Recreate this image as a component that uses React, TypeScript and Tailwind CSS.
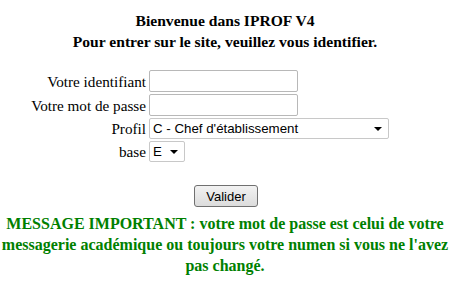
export default function App() {
  return (
    <main className="w-[450px] h-[285px] bg-white text-black font-['Liberation_Serif',serif] text-[16px] overflow-hidden">
      <div className="pt-[10px] text-center font-bold text-[15.6px] leading-[21px]">
        <p>Bienvenue dans IPROF V4</p>
        <p>Pour entrer sur le site, veuillez vous identifier.</p>
      </div>

      {/* formulaire */}
      <form className="mt-[18px] flex flex-col gap-[2px]">
        <div className="flex items-center gap-[3px]">
          <label className="w-[146px] text-right text-[15.2px] leading-[21px]">Votre identifiant</label>
          <input type="text" className="w-[149px] h-[22px] border border-[#b8b8b8] rounded-[2px] bg-white px-1 text-[13px]" />
        </div>
        <div className="flex items-center gap-[3px]">
          <label className="w-[146px] text-right text-[15.2px] leading-[21px]">Votre mot de passe</label>
          <input type="password" className="w-[149px] h-[22px] border border-[#b8b8b8] rounded-[2px] bg-white px-1 text-[13px]" />
        </div>
        <div className="flex items-center gap-[3px]">
          <label className="w-[146px] text-right text-[15.2px] leading-[21px]">Profil</label>
          <div className="w-[240px] h-[21px] border border-[#c8c8c8] rounded-[2px] bg-white flex items-center justify-between pl-[3px] pr-[6px] font-['Liberation_Sans',sans-serif] text-[13.3px]">
            <span>C - Chef d'établissement</span>
            <span className="w-0 h-0 border-l-[4px] border-r-[4px] border-t-[4px] border-l-transparent border-r-transparent border-t-black" />
          </div>
        </div>
        <div className="flex items-center gap-[3px]">
          <label className="w-[146px] text-right text-[15.2px] leading-[21px]">base</label>
          <div className="w-[36px] h-[21px] border border-[#c8c8c8] rounded-[2px] bg-white flex items-center justify-between pl-[3px] pr-[6px] font-['Liberation_Sans',sans-serif] text-[13.3px]">
            <span>E</span>
            <span className="w-0 h-0 border-l-[4px] border-r-[4px] border-t-[4px] border-l-transparent border-r-transparent border-t-black" />
          </div>
        </div>

        <div className="mt-[21px] flex justify-center pl-[2px]">
          <button type="button" className="h-[22px] px-[11px] border border-[#707070] rounded-[3px] bg-gradient-to-b from-[#f2f2f2] to-[#dcdcdc] font-['Liberation_Sans',sans-serif] text-[13px] leading-none">
            Valider
          </button>
        </div>
      </form>

      <p className="mt-[6px] text-center font-bold text-[#008000] leading-[21px]">
        MESSAGE IMPORTANT : votre mot de passe est celui de votre messagerie académique ou toujours votre numen si vous ne l'avez pas changé.
      </p>
    </main>
  );
}
